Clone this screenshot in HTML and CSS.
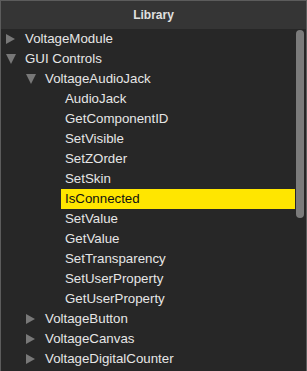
FILE: index.html
```html
<!DOCTYPE html>
<html>
<head>
<meta charset="utf-8">
<link rel="stylesheet" href="styles.css">
</head>
<body>
<div class="panel">
  <div class="header">Library</div>
  <div class="tree">
    <div class="row l0"><span class="toggle"><svg width="9" height="10" viewBox="0 0 9 10"><polygon points="0,0 9,5 0,10" /></svg></span><span class="label">VoltageModule</span></div>
    <div class="row l0"><span class="toggle"><svg width="10" height="10" viewBox="0 0 10 10"><polygon points="0,0 10,0 5,10" /></svg></span><span class="label">GUI Controls</span></div>
    <div class="row l1"><span class="toggle"><svg width="10" height="10" viewBox="0 0 10 10"><polygon points="0,0 10,0 5,10" /></svg></span><span class="label">VoltageAudioJack</span></div>
    <div class="row l2"><span class="toggle"></span><span class="label">AudioJack</span></div>
    <div class="row l2"><span class="toggle"></span><span class="label">GetComponentID</span></div>
    <div class="row l2"><span class="toggle"></span><span class="label">SetVisible</span></div>
    <div class="row l2"><span class="toggle"></span><span class="label">SetZOrder</span></div>
    <div class="row l2"><span class="toggle"></span><span class="label">SetSkin</span></div>
    <div class="row l2 selected"><span class="toggle"></span><span class="label">IsConnected</span></div>
    <div class="row l2"><span class="toggle"></span><span class="label">SetValue</span></div>
    <div class="row l2"><span class="toggle"></span><span class="label">GetValue</span></div>
    <div class="row l2"><span class="toggle"></span><span class="label">SetTransparency</span></div>
    <div class="row l2"><span class="toggle"></span><span class="label">SetUserProperty</span></div>
    <div class="row l2"><span class="toggle"></span><span class="label">GetUserProperty</span></div>
    <div class="row l1"><span class="toggle"><svg width="9" height="10" viewBox="0 0 9 10"><polygon points="0,0 9,5 0,10" /></svg></span><span class="label">VoltageButton</span></div>
    <div class="row l1"><span class="toggle"><svg width="9" height="10" viewBox="0 0 9 10"><polygon points="0,0 9,5 0,10" /></svg></span><span class="label">VoltageCanvas</span></div>
    <div class="row l1"><span class="toggle"><svg width="9" height="10" viewBox="0 0 9 10"><polygon points="0,0 9,5 0,10" /></svg></span><span class="label">VoltageDigitalCounter</span></div>
    <div class="scrollbar"></div>
  </div>
</div>
</body>
</html>
```
FILE: styles.css
```css
html, body {
  margin: 0;
  padding: 0;
  background: #272727;
}
.panel {
  box-sizing: border-box;
  width: 307px;
  height: 371px;
  border: 1px solid #5c5c5c;
  border-bottom: none;
  background: #272727;
  font-family: "Liberation Sans", Arial, sans-serif;
  overflow: hidden;
  display: flex;
  flex-direction: column;
}
.header {
  height: 28px;
  flex: none;
  background: #353535;
  color: #e0e0e0;
  font-weight: bold;
  font-size: 12px;
  display: flex;
  align-items: center;
  justify-content: center;
}
.tree {
  position: relative;
  flex: 1;
}
.row {
  height: 20px;
  display: flex;
  align-items: center;
  color: #e6e6e6;
  font-size: 13.3px;
}
.l1 { padding-left: 20px; }
.l2 { padding-left: 40px; }
.toggle {
  width: 20px;
  flex: none;
  height: 20px;
  display: flex;
  align-items: center;
  padding-left: 5px;
  box-sizing: border-box;
}
.toggle svg { fill: #787878; display: block; }
.label {
  flex: 1;
  height: 20px;
  line-height: 20px;
  padding-left: 4px;
  margin-right: 11px;
  white-space: nowrap;
}
.selected .label {
  background: #ffe600;
  color: #111;
}
.scrollbar {
  position: absolute;
  left: 295px;
  top: 1px;
  width: 8px;
  height: 188px;
  border-radius: 4px;
  background: #7b7b7b;
}
```
